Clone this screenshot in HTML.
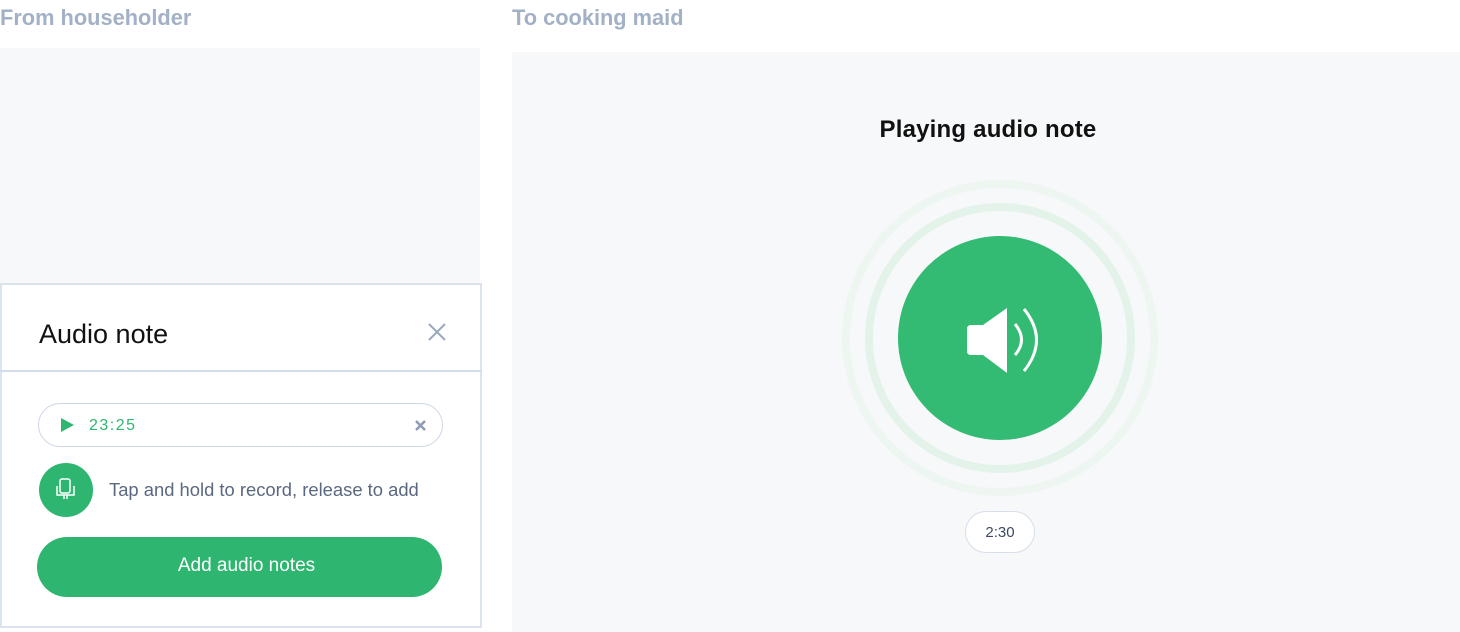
<!DOCTYPE html>
<html><head><style>
*{margin:0;padding:0;box-sizing:border-box}
body{width:1460px;height:632px;background:#fff;font-family:"Liberation Sans",sans-serif;position:relative;overflow:hidden}
.lbl{position:absolute;top:5px;font-size:21.8px;font-weight:bold;color:#a3b1c6}
.abs{position:absolute}
</style></head><body>
<div class="lbl" style="left:0">From householder</div>
<div class="lbl" style="left:512px">To cooking maid</div>
<div class="abs" style="left:0;top:48px;width:480px;height:236px;background:#f7f8fa"></div>
<div class="abs" style="left:0;top:283px;width:482px;height:345px;border:2px solid #dbe3ee;background:#fff"></div>
<div class="abs" style="left:0;top:370px;width:482px;height:2px;background:#d3dcea"></div>
<div class="abs" style="left:39px;top:319px;font-size:27px;color:#111">Audio note</div>
<svg class="abs" style="left:427px;top:322px" width="20" height="20"><path d="M2 2L18 18M18 2L2 18" stroke="#9aa8be" stroke-width="2"/></svg>
<div class="abs" style="left:38px;top:403px;width:405px;height:44px;border:1.5px solid #cdd6e6;border-radius:22px"></div>
<svg class="abs" style="left:60px;top:417px" width="16" height="16"><path d="M1 1L14 8L1 15Z" fill="#2eb670"/></svg>
<div class="abs" style="left:89px;top:417px;font-size:16px;color:#2eb670;letter-spacing:1.5px">23:25</div>
<svg class="abs" style="left:414px;top:419px" width="13" height="13"><path d="M2 2L11 11M11 2L2 11" stroke="#8d9bb3" stroke-width="2.5"/></svg>
<div class="abs" style="left:39px;top:463px;width:54px;height:54px;border-radius:50%;background:#2eb670"></div>
<svg class="abs" style="left:55px;top:478px" width="22" height="24"><rect x="5" y="1" width="10" height="14" rx="2" fill="none" stroke="#fff" stroke-width="1.5"/><path d="M2 8V17H19V8M9 17V21M12 17V21" fill="none" stroke="#fff" stroke-width="1.5"/></svg>
<div class="abs" style="left:109px;top:479px;font-size:18.4px;color:#5a6880">Tap and hold to record, release to add</div>
<div class="abs" style="left:37px;top:537px;width:405px;height:60px;border-radius:30px;background:#2eb670;color:#fff;font-size:19px;text-align:center;line-height:58px;padding-left:14px">Add audio notes</div>
<div class="abs" style="left:512px;top:52px;width:948px;height:580px;background:#f7f8fa"></div>
<div class="abs" style="left:512px;width:952px;top:116px;text-align:center;font-size:24px;color:#111;font-weight:bold;letter-spacing:0.2px">Playing audio note</div>
<svg class="abs" style="left:840px;top:178px" width="320" height="320">
<circle cx="160" cy="160" r="154" fill="none" stroke="#eef6f1" stroke-width="8"/>
<circle cx="160" cy="160" r="131" fill="none" stroke="#e4f3ea" stroke-width="8"/>
<circle cx="160" cy="160" r="102" fill="#33ba73"/>
<path d="M131 147H143L167 130V195L143 177H131Q127 177 127 173V151Q127 147 131 147Z" fill="#fff"/>
<path d="M175 146Q188 162 175 177" fill="none" stroke="#fff" stroke-width="3"/>
<path d="M184 131Q209 162 184 193" fill="none" stroke="#fff" stroke-width="3"/>
</svg>
<div class="abs" style="left:965px;top:511px;width:70px;height:42px;border:1px solid #d5deea;border-radius:21px;background:#fff;text-align:center;line-height:42px;font-size:15px;color:#3d4a60">2:30</div>
</body></html>
